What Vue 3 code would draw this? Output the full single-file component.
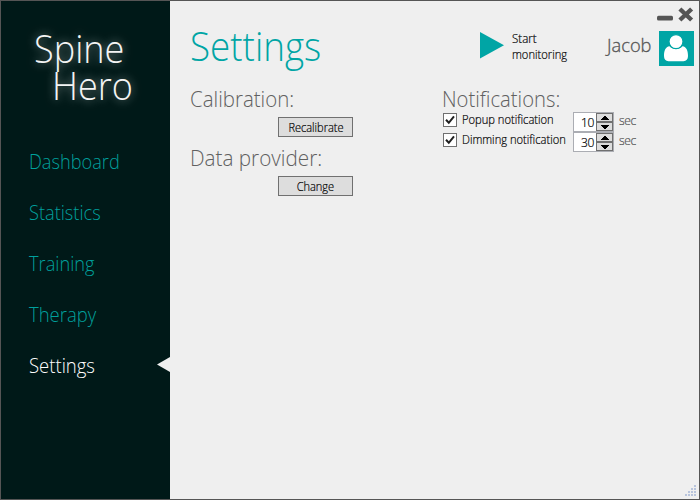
<script setup>
import { ref } from 'vue'

const nav = ['Dashboard', 'Statistics', 'Training', 'Therapy', 'Settings']
const active = ref('Settings')
const rows = ref([
  { id: 'popup', label: 'Popup notification', on: true, sec: 10 },
  { id: 'dimming', label: 'Dimming notification', on: true, sec: 30 },
])
const dots = [
  [9, 0],
  [6, 3], [9, 3],
  [3, 6], [6, 6], [9, 6],
  [0, 9], [3, 9], [6, 9], [9, 9],
]
</script>

<template>
  <div class="window">
    <aside class="sidebar">
      <div class="logo">
        <span class="spine">Spine</span>
        <span class="hero">Hero</span>
      </div>
      <nav>
        <a
          v-for="item in nav"
          :key="item"
          :class="['item', item.toLowerCase(), { active: item === active }]"
          @click="active = item"
        >
          <span class="narrow">{{ item }}</span>
          <svg v-if="item === active" class="arrow" width="13" height="16" viewBox="0 0 13 16">
            <path d="M0 7.500 13 0v15z" fill="#efefef" />
          </svg>
        </a>
      </nav>
    </aside>

    <main>
      <header>
        <h1><span class="narrow">Settings</span></h1>
        <div class="start">
          <svg width="24" height="27" viewBox="0 0 24 27"><path d="M0 0 24 13.300 0 26.500z" fill="#00a5a5" /></svg>
          <div class="start-text"><span class="narrow l1">Start</span><span class="narrow">monitoring</span></div>
        </div>
        <div class="right">
          <div class="controls">
            <svg width="37" height="16" viewBox="0 0 37 16">
              <rect x="0" y="9.800" width="16" height="4.700" rx="1.500" fill="#555" />
              <path d="M24.500 4.500 33 12.500M33 4.500 24.500 12.500" stroke="#555" stroke-width="4.400" stroke-linecap="square" />
            </svg>
          </div>
          <div class="user">
            <span class="name">Jacob</span>
            <svg width="35" height="35" viewBox="0 0 35 35">
              <rect width="35" height="35" fill="#00a5a5" />
              <path d="M10.500 15.200C6.500 15.800 5 19.500 5 25c0 3.300 1.700 5.200 4.500 5.200h15c2.800 0 4.500-1.900 4.500-5.200 0-5.500-1.500-9.200-5.500-9.800C21.800 17 19.500 18 17 18s-4.800-1-6.500-2.800z" fill="#fff" />
              <circle cx="17" cy="10.600" r="7" fill="#fff" stroke="#00a5a5" stroke-width="1.200" />
            </svg>
          </div>
        </div>
      </header>

      <div class="columns">
        <section class="left">
          <h2><span class="narrow">Calibration:</span></h2>
          <button><span class="centered">Recalibrate</span></button>
          <h2><span class="narrow prov">Data provider:</span></h2>
          <button><span class="centered">Change</span></button>
        </section>
        <section class="notes">
          <h2><span class="narrow">Notifications:</span></h2>
          <div v-for="r in rows" :key="r.id" class="row">
            <svg class="check" width="14" height="14" viewBox="0 0 14 14" @click="r.on = !r.on">
              <rect x=".5" y=".5" width="13" height="13" fill="#fff" stroke="#707070" />
              <path v-if="r.on" d="M3 6.800 5.800 9.800 11 3.300" fill="none" stroke="#212121" stroke-width="2" />
            </svg>
            <div class="label"><span class="narrow">{{ r.label }}</span></div>
            <div class="spinner">
              <span class="value">{{ r.sec }}</span>
              <div class="steps">
                <button @click="r.sec++"><svg width="8" height="4" viewBox="0 0 8 4" shape-rendering="crispEdges"><path d="M3 0h2v1h1v1h1v1h1v1H0V3h1V2h1V1h1z" /></svg></button>
                <button @click="r.sec--"><svg width="8" height="4" viewBox="0 0 8 4" shape-rendering="crispEdges"><path d="M0 0h8v1H7v1H6v1H5v1H3V3H2V2H1V1H0z" /></svg></button>
              </div>
            </div>
            <span class="sec">sec</span>
          </div>
        </section>
      </div>

      <footer>
        <svg width="12" height="12" viewBox="0 0 12 12">
          <g v-for="([x, y], i) in dots" :key="i">
            <rect :x="x + 1" :y="y + 1" width="1" height="1" fill="#fff" />
            <rect :x="x" :y="y" width="2" height="2" fill="#b8c4dc" />
          </g>
        </svg>
      </footer>
    </main>
  </div>
</template>

<style>
body { margin: 0; }
</style>

<style scoped>
* { box-sizing: border-box; }
.window {
  width: 700px;
  height: 500px;
  display: flex;
  border: 1px solid #555;
  background: #efefef;
  font-family: "Open Sans", "Noto Sans", sans-serif;
  font-weight: 300;
  color: #000;
  overflow: hidden;
  white-space: nowrap;
}
.narrow {
  display: inline-block;
  transform: scaleX(0.93);
  transform-origin: left;
}
.sidebar {
  width: 169px;
  background: #001918;
  display: flex;
  flex-direction: column;
}
.logo {
  height: 134px;
  padding: 28px 0 0 33px;
  display: flex;
  flex-direction: column;
  color: #f4f4f4;
  font-size: 39px;
  line-height: 37px;
  text-shadow: 0 0 10px rgba(255, 255, 255, 0.55);
}
.logo span { transform: scaleX(0.925); transform-origin: left; height: 37px; }
.hero { margin-left: 18px; }
.item {
  height: 51px;
  padding-left: 28px;
  display: flex;
  align-items: center;
  justify-content: space-between;
  font-size: 20px;
  line-height: 51px;
  color: #00a09d;
  cursor: pointer;
}
.item .narrow { transform: translateY(0.5px) scaleX(0.91); }
.item.active { color: #fff; }
.item.therapy .narrow, .item.settings .narrow { transform: translateY(0.5px) scaleX(0.925); }
.arrow { display: block; }
main {
  flex: 1;
  display: flex;
  flex-direction: column;
  padding-left: 20px;
}
h1, h2 { margin: 0; font-weight: 300; }
header { height: 84px; display: flex; }
h1 {
  width: 290px;
  color: #00a5a5;
  font-size: 40px;
  line-height: 54px;
  padding-top: 18px;
}
h1 .narrow, .notes h2 .narrow { transform: scaleX(0.92); }
.start { display: flex; gap: 8px; padding-top: 31px; width: 127px; }
.start-text {
  display: flex;
  flex-direction: column;
  font-size: 12px;
  line-height: 16px;
  margin-top: -1px;
}
.start-text, .label, .centered, .value, .sec { -webkit-text-stroke: 0.2px currentColor; }
.start-text .l1 { transform: scaleX(0.96); }
.right { flex: 1; }
.controls { height: 30px; padding: 5px 0 0 50px; }
.controls svg, .user svg { display: block; }
.user { display: flex; justify-content: space-between; width: 87px; }
.name { color: #555; font-size: 18.3px; line-height: 27px; -webkit-text-stroke: 0.3px #555; }
.columns { display: flex; flex: 1; }
.left { width: 252px; display: flex; flex-direction: column; }
h2 { height: 32px; font-size: 22px; line-height: 26px; color: #606060; }
h2 .prov { transform: scaleX(0.94); }
.left button {
  width: 75px;
  height: 20px;
  margin: 0 0 7px 88px;
  padding: 0;
  border: 1px solid #707070;
  background: #ddd;
  font: 300 12px/19px "Open Sans", sans-serif;
  color: #000;
}
.centered { display: inline-block; transform: scaleX(0.92); }
.notes h2 { height: 27px; }
.row { height: 20px; display: flex; align-items: flex-start; }
.check { margin: 1px 5px 0 1px; flex: none; }
.label { width: 111px; font-size: 12px; line-height: 16px; }
.spinner {
  width: 41px;
  height: 20px;
  display: flex;
  border: 1px solid #abadb3;
  background: #fff;
}
.value { width: 22px; text-align: right; padding-right: 2px; font-size: 12px; line-height: 20px; letter-spacing: -0.4px; }
.steps { width: 17px; height: 18px; display: flex; flex-direction: column; }
.steps button {
  height: 9px;
  padding: 0;
  border: 1px solid #707070;
  background: #ddd;
  display: flex;
  align-items: center;
  justify-content: center;
}
.sec { margin-left: 5px; font-size: 12px; line-height: 18px; color: #555; letter-spacing: -0.4px; }
footer { display: flex; justify-content: flex-end; padding: 0 2px 2px 0; }
footer svg { display: block; }
</style>
